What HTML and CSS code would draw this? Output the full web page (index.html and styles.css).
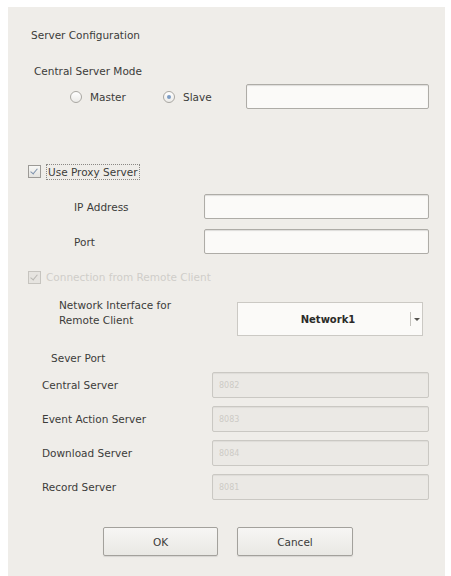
FILE: index.html
```html
<!DOCTYPE html>
<html lang="en">
<head>
  <meta charset="UTF-8" />
  <meta name="viewport" content="width=device-width, initial-scale=1.0" />
  <title>Server Configuration</title>
  <link rel="stylesheet" href="styles.css">
</head>
<body>
  <div class="dialog">
    <div class="title">Server Configuration</div>

    <div class="group-label mode-label">Central Server Mode</div>
    <div class="mode-row">
      <label class="radio master"><span class="dot"></span>Master</label>
      <label class="radio slave"><span class="dot on"></span>Slave</label>
      <input type="text" class="field slave-field" />
    </div>

    <div class="check-row proxy">
      <span class="box checked"></span>
      <span class="focus">Use Proxy Server</span>
    </div>

    <div class="field-row proxy-row">
      <span class="proxy-label">IP Address</span>
      <input type="text" class="field proxy-field" />
    </div>
    <div class="field-row proxy-row port">
      <span class="proxy-label">Port</span>
      <input type="text" class="field proxy-field" />
    </div>

    <div class="check-row remote disabled">
      <span class="box checked"></span>
      <span>Connection from Remote Client</span>
    </div>

    <div class="net-row">
      <span class="net-label">Network Interface for<br>Remote Client</span>
      <div class="combo">
        <span class="combo-value">Network1</span>
        <span class="combo-arrow"></span>
      </div>
    </div>

    <div class="group-label port-label">Sever Port</div>

    <div class="ports">
      <div class="port-row">
        <span>Central Server</span>
        <input type="text" class="field off" value="8082" disabled />
      </div>
      <div class="port-row">
        <span>Event Action Server</span>
        <input type="text" class="field off" value="8083" disabled />
      </div>
      <div class="port-row">
        <span>Download Server</span>
        <input type="text" class="field off" value="8084" disabled />
      </div>
      <div class="port-row">
        <span>Record Server</span>
        <input type="text" class="field off" value="8081" disabled />
      </div>
    </div>

    <div class="buttons">
      <button class="btn ok">OK</button>
      <button class="btn">Cancel</button>
    </div>
  </div>
</body>
</html>
```

FILE: styles.css
```css
body {
  margin: 0;
  background-color: #ffffff;
  font-family: 'DejaVu Sans', sans-serif;
  font-size: 10.5px;
  color: #3c3c3a;
}

.dialog {
  margin: 7px 6px 0 8px;
  height: 569px;
  background-color: #efede9;
  padding: 0 16px 0 0;
  box-sizing: border-box;
  overflow: hidden;
}

.title {
  margin-top: 21px;
  padding-left: 23px;
  line-height: 14px;
}

.group-label {
  line-height: 14px;
}

.mode-label {
  margin-top: 22px;
  padding-left: 26px;
}

/* radios + slave address */
.mode-row {
  display: flex;
  align-items: center;
  margin-top: 6px;
  height: 25px;
}

.radio {
  display: flex;
  align-items: center;
  gap: 8px;
}

.master {
  margin-left: 62px;
  width: 93px;
}

.slave {
  width: 83px;
}

.dot {
  width: 10px;
  height: 10px;
  border: 1px solid #a9a7a2;
  border-radius: 50%;
  background: linear-gradient(#ffffff, #ecebe8);
  position: relative;
}

.dot.on::after {
  content: "";
  position: absolute;
  left: 3px;
  top: 3px;
  width: 4px;
  height: 4px;
  border-radius: 50%;
  background-color: #7d9cc4;
}

.field {
  box-sizing: border-box;
  height: 25px;
  border: 1px solid #aeaca7;
  border-radius: 2px;
  background-color: #fbfaf8;
  box-shadow: inset 0 1px 1px rgba(0,0,0,0.12);
  font-family: inherit;
  font-size: 8px;
  padding: 0 6px;
  margin: 0;
}

.slave-field {
  width: 183px;
}

/* checkboxes */
.check-row {
  display: flex;
  align-items: center;
  gap: 5px;
  padding-left: 20px;
  line-height: 14px;
}

.proxy {
  margin-top: 54px;
  height: 17px;
}

.box {
  width: 11px;
  height: 11px;
  border: 1px solid #9c9a96;
  background: linear-gradient(#f8f8f6, #e4e3df);
  position: relative;
}

.box.checked::after {
  content: "";
  position: absolute;
  left: 3px;
  top: 1px;
  width: 3px;
  height: 6px;
  border: solid #7f93ad;
  border-width: 0 1.5px 1.5px 0;
  transform: rotate(40deg);
}

.focus {
  border: 1px dotted #8a8884;
  padding: 0 1px;
}

.field-row {
  display: flex;
  align-items: center;
}

.proxy-row {
  margin-top: 14px;
}

.proxy-row.port {
  margin-top: 10px;
}

.proxy-label {
  width: 130px;
  padding-left: 66px;
}

.proxy-field {
  width: 225px;
}

.disabled {
  color: #d0cecA;
  margin-top: 16px;
}

.disabled .box {
  border-color: #c6c4bf;
  background: #e6e4e0;
}

.disabled .box.checked::after {
  border-color: #b9b7b2;
}

/* network interface picker */
.net-row {
  display: flex;
  align-items: flex-start;
  margin-top: 18px;
}

.net-label {
  width: 178px;
  padding-left: 51px;
  line-height: 15px;
  margin-top: -4px;
}

.combo {
  width: 186px;
  height: 34px;
  box-sizing: border-box;
  border: 1px solid #cbc9c4;
  background-color: #fbfaf8;
  display: flex;
  align-items: center;
  position: relative;
}

.combo-value {
  flex: 1;
  text-align: center;
  font-weight: bold;
  font-size: 10px;
  color: #2a2a28;
  padding-left: 8px;
}

.combo-arrow {
  width: 11px;
  height: 14px;
  border-left: 1px solid #c3c1bc;
  position: relative;
}

.combo-arrow::after {
  content: "";
  position: absolute;
  left: 3px;
  top: 6px;
  border-left: 3px solid transparent;
  border-right: 3px solid transparent;
  border-top: 3px solid #55534f;
}

.port-label {
  margin-top: 15px;
  padding-left: 43px;
}

/* disabled port list */
.ports {
  margin-top: 7px;
  display: flex;
  flex-direction: column;
  gap: 8px;
}

.port-row {
  display: flex;
  align-items: center;
}

.port-row span {
  width: 170px;
  padding-left: 34px;
}

.field.off {
  width: 217px;
  height: 26px;
  background-color: #ebe9e5;
  border-color: #cac8c3;
  color: #cdcbc6;
  box-shadow: inset 0 1px 1px rgba(0,0,0,0.06);
}

.buttons {
  display: flex;
  gap: 19px;
  margin-top: 27px;
  padding-left: 95px;
}

.btn {
  width: 116px;
  height: 29px;
  border: 1px solid #a3a19c;
  border-radius: 2px;
  background: linear-gradient(#f7f6f4, #e9e8e4);
  font-family: inherit;
  font-size: 10.5px;
  color: #3c3c3a;
  box-shadow: 0 1px 1px rgba(0,0,0,0.1);
}

.btn.ok {
  width: 115px;
}
```
